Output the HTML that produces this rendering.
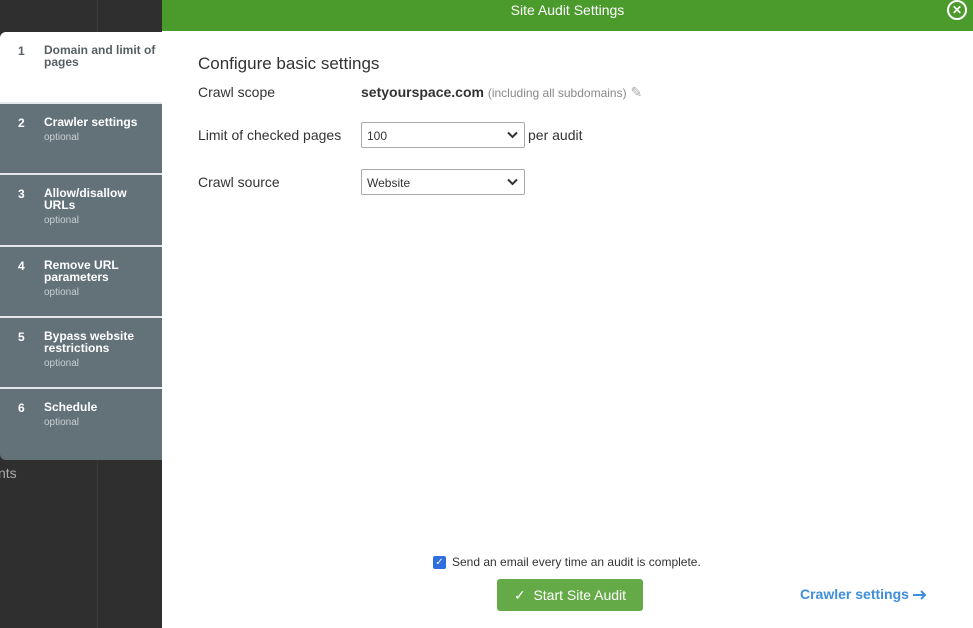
<!DOCTYPE html>
<html><head><style>
*{margin:0;padding:0;box-sizing:border-box}
body{width:973px;height:628px;overflow:hidden;background:#2f2f2f;font-family:"Liberation Sans",sans-serif;position:relative}
.vl{position:absolute;left:97px;top:0;width:1px;height:628px;background:#3a3a3a}
.nts{position:absolute;left:-2px;top:465px;color:#aaa;font-size:14px}
.hdr{position:absolute;left:162px;top:0;width:811px;height:31px;background:#4a9a2c;color:#fff;font-size:14px;text-align:center;line-height:20px}
.close{position:absolute;right:6px;top:0px;width:20px;height:20px;border:2px solid #fff;border-radius:50%;color:#fff;font-size:12px;font-weight:bold;line-height:16px;text-align:center}
.main{position:absolute;left:162px;top:31px;width:811px;height:597px;background:#fff}
.side{position:absolute;left:0;top:32px;width:162px;height:428px;background:#637279;border-radius:6px 0 0 6px;overflow:hidden}
.st{position:absolute;left:0;width:162px;color:#fff;font-size:12px;font-weight:bold;border-bottom:2px solid #e4e8ea}
.st .n{position:absolute;left:18px;top:12px}
.st .t{position:absolute;left:44px;top:12px;line-height:12px;width:115px}
.st .o{display:block;font-weight:normal;font-size:10px;color:#c9d0d3;margin-top:4px}
.st1{background:#fff;color:#555f63}
.lbl{position:absolute;left:198px;font-size:14px;color:#333}
.sel{position:absolute;left:361px;width:164px;height:26px;border:1px solid #aaa;border-radius:2px;font-size:12px;color:#333;padding:6px 5px}
.chev{position:absolute;right:6px;top:8px}
</style></head><body>
<div class="vl"></div>
<div class="nts">nts</div>
<div class="hdr">Site Audit Settings<div class="close">✕</div></div>
<div class="main"></div>
<div class="side">
<div class="st st1" style="top:0;height:72px"><span class="n">1</span><span class="t">Domain and limit of pages</span></div>
<div class="st" style="top:72px;height:71px"><span class="n">2</span><span class="t">Crawler settings<span class="o">optional</span></span></div>
<div class="st" style="top:143px;height:72px"><span class="n">3</span><span class="t">Allow/disallow URLs<span class="o">optional</span></span></div>
<div class="st" style="top:215px;height:71px"><span class="n">4</span><span class="t">Remove URL parameters<span class="o">optional</span></span></div>
<div class="st" style="top:286px;height:71px"><span class="n">5</span><span class="t">Bypass website restrictions<span class="o">optional</span></span></div>
<div class="st" style="top:357px;height:71px;border:0"><span class="n">6</span><span class="t">Schedule<span class="o">optional</span></span></div>
</div>
<div class="lbl" style="top:54px;font-size:17px">Configure basic settings</div>
<div class="lbl" style="top:84px">Crawl scope</div>
<div class="lbl" style="left:361px;top:84px"><b>setyourspace.com</b> <span style="font-size:12px;color:#888">(including all subdomains)</span> <span style="color:#aaa">✎</span></div>
<div class="lbl" style="top:127px">Limit of checked pages</div>
<div class="sel" style="top:122px">100<svg class="chev" width="11" height="8" viewBox="0 0 11 8"><path d="M1 1.5l4.5 4.5 4.5-4.5" stroke="#333" stroke-width="2" fill="none"/></svg></div>
<div class="lbl" style="left:528px;top:127px">per audit</div>
<div class="lbl" style="top:174px">Crawl source</div>
<div class="sel" style="top:169px">Website<svg class="chev" width="11" height="8" viewBox="0 0 11 8"><path d="M1 1.5l4.5 4.5 4.5-4.5" stroke="#333" stroke-width="2" fill="none"/></svg></div>
<div style="position:absolute;left:433px;top:556px;width:13px;height:13px;background:#2f6fe0;border-radius:2px;color:#fff;font-size:10px;text-align:center;line-height:13px">✓</div>
<div style="position:absolute;left:452px;top:555px;font-size:12px;color:#333">Send an email every time an audit is complete.</div>
<div style="position:absolute;left:497px;top:579px;width:146px;height:32px;background:#64ab48;border-radius:3px;color:#fff;font-size:14px;line-height:32px;text-align:center">✓&nbsp; Start Site Audit</div>
<div style="position:absolute;left:800px;top:586px;font-size:14px;font-weight:bold;color:#3f8edc">Crawler settings <svg width="14" height="10" viewBox="0 0 14 10" style="vertical-align:-1px"><path d="M0 5h12M8 1l4 4-4 4" stroke="#3f8edc" stroke-width="2" fill="none"/></svg></div>
</body></html>
